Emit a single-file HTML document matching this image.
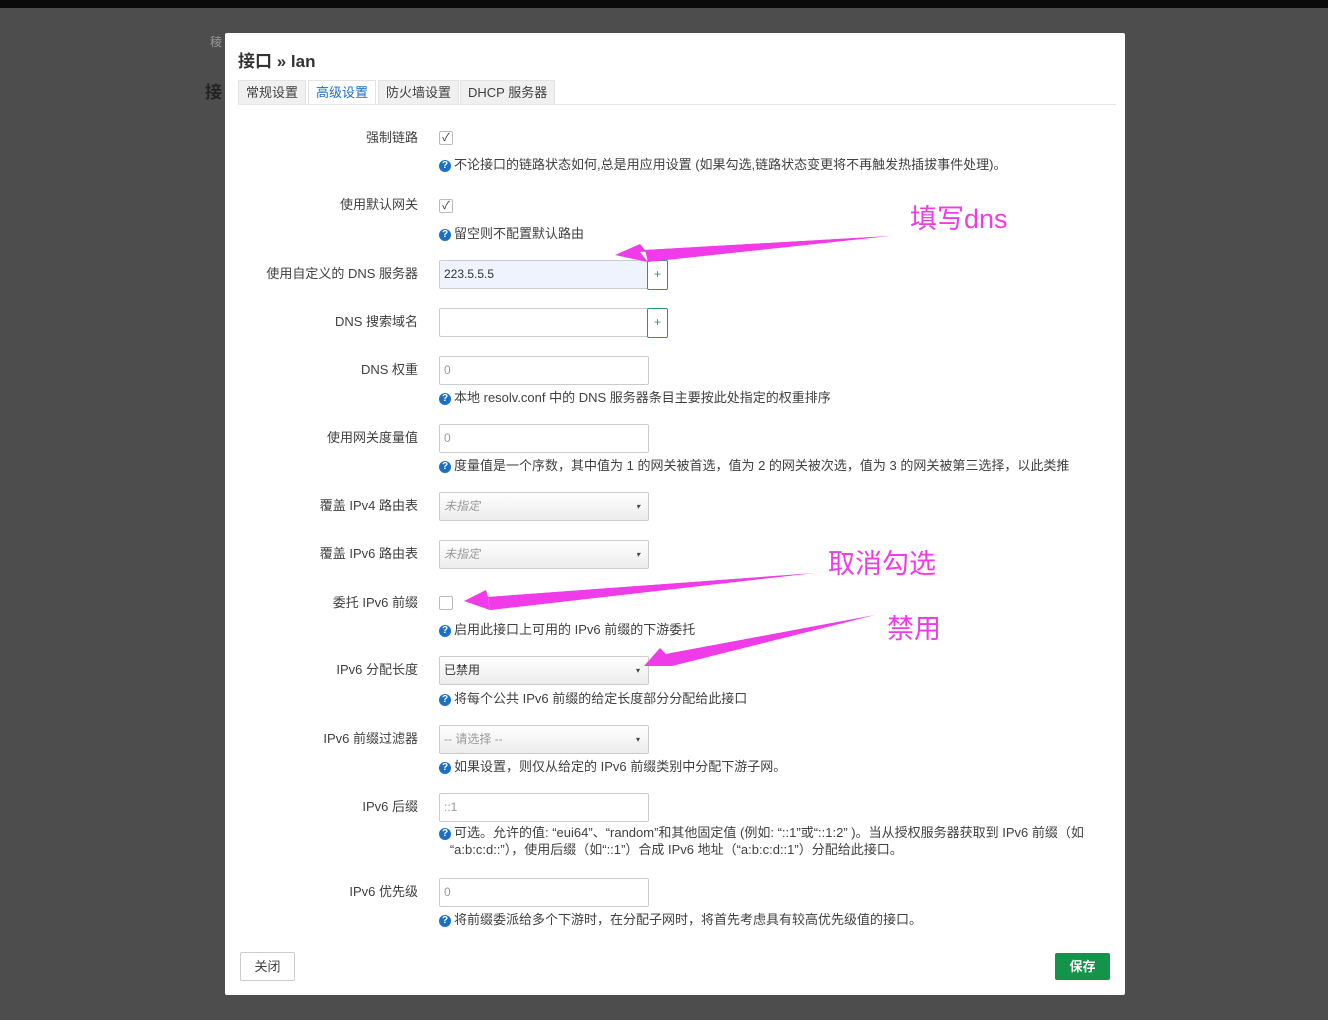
<!DOCTYPE html><html><head><meta charset="utf-8"><style>
body{margin:0;width:1328px;height:1020px;background:#4d4d4d;position:relative;overflow:hidden;font-family:"Liberation Sans","Noto Sans CJK SC",sans-serif;font-size:13px;color:#404040}
.top{position:absolute;left:0;top:0;width:1328px;height:8px;background:#0a0a0a}
.modal{position:absolute;left:225px;top:33px;width:900px;height:962px;background:#fff;border-radius:2px}
.a{position:absolute}
.lbl{position:absolute;right:910px;width:200px;text-align:right;white-space:nowrap;margin-top:-2px}
.inp{position:absolute;left:439px;width:208px;height:27px;border:1px solid #ccc;border-radius:2px;background:#fff;line-height:27px;text-indent:4px;color:#999;font-size:12px}
.sel{background:linear-gradient(#fff,#ececec);}
.sel:after{content:"▾";position:absolute;right:8px;top:0;font-size:8px;color:#444}
.help{position:absolute;left:439px;white-space:nowrap;font-size:13px;color:#404040;margin-top:-2px}
.q{display:inline-block;width:12px;height:12px;border-radius:50%;background:#1a6fc9;color:#fff;font-size:10px;line-height:12px;text-align:center;font-weight:bold;margin-right:3px;vertical-align:1px}
.cb{position:absolute;left:439px;width:12px;height:12px;border:1px solid #bbb;border-radius:2px;background:#fff;font-size:11px;line-height:12px;text-align:center;color:#333}
.plus{position:absolute;left:647px;width:19px;height:28px;border:1px solid #2e9a5a;border-radius:2px;color:#2e9a5a;text-align:center;line-height:26px;font-size:12px;background:#fff}
.tab{position:absolute;top:80px;height:24px;line-height:24px;padding:0 7px;background:#f0f0f0;border:1px solid #e3e3e3;border-bottom:none;font-size:13px;color:#404040}
.ann{position:absolute;color:#f03ce8;font-size:27px;white-space:nowrap}
</style></head><body>
<div class="top"></div>
<div class="a" style="left:205px;top:78px;color:#222;font-size:17px;font-weight:bold">接</div>
<div class="a" style="left:210px;top:33px;color:#999;font-size:12px">稜</div>
<div class="modal"></div>
<div class="a" style="left:238px;top:47px;font-size:17px;font-weight:bold;color:#333">接口 » lan</div>
<div class="tab" style="left:238px">常规设置</div>
<div class="tab" style="left:308px;background:#fff;color:#1a6fc9">高级设置</div>
<div class="tab" style="left:378px">防火墙设置</div>
<div class="tab" style="left:460px">DHCP 服务器</div>
<div class="a" style="left:238px;top:104px;width:878px;height:1px;background:#e6e6e6"></div>

<div class="lbl" style="top:129px">强制链路</div><div class="cb" style="top:131px">✓</div>
<div class="help" style="top:156px"><span class="q">?</span>不论接口的链路状态如何,总是用应用设置 (如果勾选,链路状态变更将不再触发热插拔事件处理)。</div>
<div class="lbl" style="top:196px">使用默认网关</div><div class="cb" style="top:199px">✓</div>
<div class="help" style="top:225px"><span class="q">?</span>留空则不配置默认路由</div>
<div class="lbl" style="top:265px">使用自定义的 DNS 服务器</div>
<div class="inp" style="top:260px;background:#eef3fd;color:#333">223.5.5.5</div><div class="plus" style="top:260px">+</div>
<div class="lbl" style="top:313px">DNS 搜索域名</div>
<div class="inp" style="top:308px"></div><div class="plus" style="top:308px">+</div>
<div class="lbl" style="top:361px">DNS 权重</div><div class="inp" style="top:356px">0</div>
<div class="help" style="top:389px"><span class="q">?</span>本地 resolv.conf 中的 DNS 服务器条目主要按此处指定的权重排序</div>
<div class="lbl" style="top:429px">使用网关度量值</div><div class="inp" style="top:424px">0</div>
<div class="help" style="top:457px"><span class="q">?</span>度量值是一个序数，其中值为 1 的网关被首选，值为 2 的网关被次选，值为 3 的网关被第三选择，以此类推</div>
<div class="lbl" style="top:497px">覆盖 IPv4 路由表</div><div class="inp sel" style="top:492px;font-style:italic">未指定</div>
<div class="lbl" style="top:545px">覆盖 IPv6 路由表</div><div class="inp sel" style="top:540px;font-style:italic">未指定</div>
<div class="lbl" style="top:594px">委托 IPv6 前缀</div><div class="cb" style="top:596px"></div>
<div class="help" style="top:621px"><span class="q">?</span>启用此接口上可用的 IPv6 前缀的下游委托</div>
<div class="lbl" style="top:661px">IPv6 分配长度</div><div class="inp sel" style="top:656px;color:#333">已禁用</div>
<div class="help" style="top:690px"><span class="q">?</span>将每个公共 IPv6 前缀的给定长度部分分配给此接口</div>
<div class="lbl" style="top:730px">IPv6 前缀过滤器</div><div class="inp sel" style="top:725px">-- 请选择 --</div>
<div class="help" style="top:758px"><span class="q">?</span>如果设置，则仅从给定的 IPv6 前缀类别中分配下游子网。</div>
<div class="lbl" style="top:798px">IPv6 后缀</div><div class="inp" style="top:793px">::1</div>
<div class="help" style="top:826px;line-height:17px"><span class="q">?</span>可选。允许的值: “eui64”、“random”和其他固定值 (例如: “::1”或“::1:2” )。当从授权服务器获取到 IPv6 前缀（如<br>&nbsp;&nbsp;&nbsp;“a:b:c:d::”），使用后缀（如“::1”）合成 IPv6 地址（“a:b:c:d::1”）分配给此接口。</div>
<div class="lbl" style="top:883px">IPv6 优先级</div><div class="inp" style="top:878px">0</div>
<div class="help" style="top:911px"><span class="q">?</span>将前缀委派给多个下游时，在分配子网时，将首先考虑具有较高优先级值的接口。</div>

<div class="a" style="left:240px;top:952px;width:53px;height:27px;border:1px solid #ccc;border-radius:2px;text-align:center;line-height:27px">关闭</div>
<div class="a" style="left:1055px;top:953px;width:55px;height:27px;border-radius:2px;background:#14934a;color:#fff;text-align:center;line-height:27px;font-weight:bold">保存</div>

<svg class="a" style="left:0;top:0" width="1328" height="1020">
<polygon points="890,236 640,252 648,262 615,255 640,244 645,250" fill="#f03ce8"/>
<polygon points="890,236 645,250 648,262" fill="#f03ce8"/>
<polygon points="815,573 488,598 490,610 464,601 486,590 488,597" fill="#f03ce8"/>
<polygon points="815,573 488,597 490,610" fill="#f03ce8"/>
<polygon points="875,615 668,655 672,666 644,666 660,648 666,654" fill="#f03ce8"/>
<polygon points="875,615 666,654 672,666" fill="#f03ce8"/>
</svg>
<div class="ann" style="left:910px;top:197px">填写dns</div>
<div class="ann" style="left:828px;top:542px">取消勾选</div>
<div class="ann" style="left:887px;top:607px">禁用</div>
</body></html>
